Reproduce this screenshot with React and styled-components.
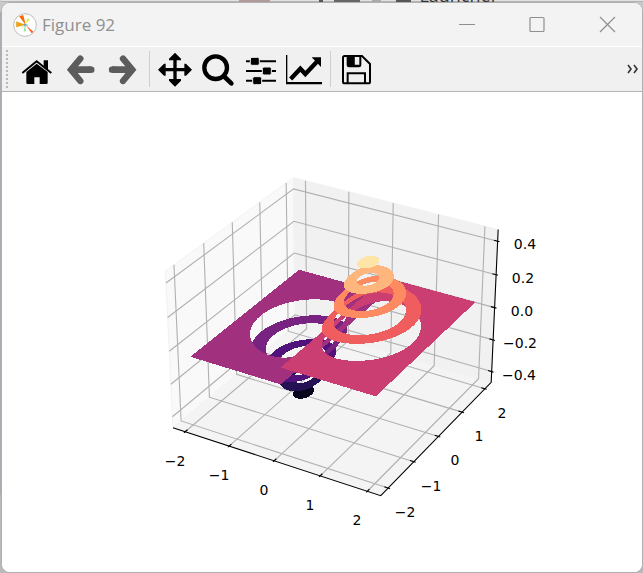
import React from "react";
import styled, { createGlobalStyle } from "styled-components";

const GlobalStyle = createGlobalStyle`
  * { box-sizing: border-box; }
  body { margin: 0; background: #b4b5b7; }
`;

const Desktop = styled.div`
  min-height: 100vh;
  display: grid;
  grid-template-rows: 2px 1fr;
  padding-left: 1px;
  background: linear-gradient(#c9c9c9 0 12px, #a9adb2 12px 495px, #b9b9b9 495px);
`;

const Behind = styled.div`
  display: flex;
  justify-content: flex-end;
  align-items: flex-end;
  height: 2px;
  padding-right: 145px;
  overflow: hidden;
  background: linear-gradient(#e2e2e2 0 1px, #b4b4b4 1px);
  color: #333;
  font: 18px/14px "Open Sans", sans-serif;
`;

const BehindMark = styled.i`
  width: ${(p) => p.$width}px;
  height: 2px;
  margin-right: ${(p) => p.$gap}px;
  background: ${(p) => p.$color};
`;

const Window = styled.main`
  display: flex;
  flex-direction: column;
  overflow: hidden;
  border: 1px solid #b0b0b0;
  border-radius: 9px;
  background: #fff;
`;

const TitleBar = styled.header`
  display: flex;
  align-items: center;
  height: 44px;
  padding-left: 11px;
  background: #f3f3f3;
  border-bottom: 1px solid #fff;
`;

const Title = styled.h1`
  flex: 1;
  margin: 0 0 0 5px;
  color: #8f8f8f;
  font: 400 17px/24px "Open Sans", sans-serif;
`;

const CaptionButton = styled.button`
  width: 70px;
  height: 40px;
  padding: 0;
  border: 0;
  background: transparent;
  color: #8f8f8f;
`;

const Toolbar = styled.nav`
  display: flex;
  align-items: center;
  height: 45px;
  padding-left: 4px;
  background: #f0f0f0;
  border-bottom: 1px solid #b5b5b5;
`;

const Grip = styled.span`
  width: 2px;
  height: 38px;
  margin-right: 8px;
  background: repeating-linear-gradient(#b8b8b8 0 2px, transparent 2px 4px);
`;

const ToolButton = styled.button`
  flex: none;
  width: 43px;
  height: 44px;
  padding: 0;
  border: 0;
  background: transparent;
  color: #000;

  &:disabled { color: #5c5c5c; }
`;

const Divider = styled.span`
  flex: none;
  width: 1px;
  height: 36px;
  margin: 0 4px;
  background: #cfcfcf;
`;

const MoreButton = styled(ToolButton)`
  width: 18px;
  margin-left: auto;
  color: #333;
`;

const Canvas = styled.section`
  flex: 1;
  min-height: 0;
  background: #fff;
`;

const Plot = styled.svg`
  display: block;
  width: 100%;
  font: 14px "DejaVu Sans", sans-serif;
`;

const Icon = styled.svg`
  display: block;
  flex: none;
  margin: 0 auto;
`;

/* ---------- toolbar drawings ---------- */

const arrow = (
  <g fill="none" stroke="currentColor" strokeWidth="19">
    <path d="M64 35L36 68L64 102" strokeLinecap="round" />
    <path d="M44 68H97" strokeWidth="20" />
    <path d="M92 68H97" strokeLinecap="round" />
  </g>
);

const drawings = {
  home: (
    <g fill="currentColor">
      <path d="M19 78L62 43L106 78" fill="none" stroke="currentColor" strokeWidth="6" />
      <path d="M83 40H96V68L83 58Z" />
      <path d="M31 75L62 50L95 75V107Q95 111 91 111H71V91H55V111H35Q31 111 31 107Z" />
    </g>
  ),
  back: arrow,
  forward: <g transform="translate(127 0) scale(-1 1)">{arrow}</g>,
  pan: (
    <path
      fill="currentColor"
      d="M63 17L81 35V40H68V63H91V50H96L114 68L96 86H91V73H68V96H81V101L63 119L45 101V96H58V73H35V86H30L12 68L30 50H35V63H58V40H45V35Z"
    />
  ),
  zoom: (
    <g fill="none" stroke="currentColor" strokeWidth="13">
      <circle cx="56" cy="62" r="34" />
      <path d="M80 87L103 109" strokeWidth="14" strokeLinecap="round" />
    </g>
  ),
  subplots: (
    <g fill="currentColor">
      <path d="M18 40H108V46H18ZM18 69H108V75H18ZM18 98H108V104H18Z" />
      <g stroke="#f0f0f0" strokeWidth="3">
        <rect x="31" y="31" width="27" height="24" rx="5" />
        <rect x="67" y="60" width="27" height="24" rx="5" />
        <rect x="38" y="89" width="27" height="24" rx="5" />
      </g>
    </g>
  ),
  axes: (
    <g fill="currentColor">
      <path d="M9 24H13V105H117V112H9Z" />
      <path d="M23 96L52 65L67 81L101 45" fill="none" stroke="currentColor" strokeWidth="13" />
      <path d="M86 31H114V60Z" />
    </g>
  ),
  save: (
    <g fill="none" stroke="currentColor" strokeWidth="6">
      <path d="M29 27H81L105 51V104Q105 109 100 109H29Q24 109 24 104V32Q24 27 29 27Z" />
      <path d="M38 109V79H90V109" />
      <path d="M38 27V54Q38 58 42 58H72Q76 58 76 54V27" />
      <path d="M38 27H58V58H38Z" fill="currentColor" stroke="none" />
      <path d="M56 30V56H73" />
    </g>
  ),
};

const tools = [
  ["home", "Home"],
  ["back", "Back", true],
  ["forward", "Forward", true],
  null,
  ["pan", "Pan"],
  ["zoom", "Zoom"],
  ["subplots", "Configure subplots"],
  ["axes", "Edit axes"],
  null,
  ["save", "Save"],
];

function FigureIcon() {
  return (
    <svg width="24" height="24" viewBox="0 0 72 72" aria-hidden="true">
      <circle cx="36" cy="36" r="34" fill="#fff" stroke="#bdbdbd" strokeWidth="3" />
      <path d="M38 36L18 10L31 6Z" fill="#ff6a00" />
      <path d="M36 35L10 42V26Z" fill="#f4a300" stroke="#b98a2a" strokeWidth="1" />
      <path d="M38 32L43 16L51 20Z" fill="#d4ef52" />
      <path d="M39 37L61 56L56 61Z" fill="#ff5a1c" />
      <path d="M36 38L39 55L32 55Z" fill="#7bea8a" />
      <path d="M34 38L27 45L25 42Z" fill="#c5ee60" />
      <path d="M32 36H44M36 32V41" stroke="#5b9aa8" strokeWidth="3" />
    </svg>
  );
}

/* ---------- 3D plot ---------- */

const LIMIT = 2.19;
const Z_LIMIT = 0.45;
const PAD = 1 + 1 / 24;
const EDGE = LIMIT * PAD;
const Z_EDGE = Z_LIMIT * PAD;
const SIDE = 8 / 7;
const HEIGHT = 6 / 7;
const DISTANCE = 10;
const SCALE = 2000;

// Camera at 30 degrees elevation and -60 degrees azimuth.
function project(x, y, z) {
  const a = (x / (2 * LIMIT)) * SIDE;
  const b = (y / (2 * LIMIT)) * SIDE;
  const c = (z / (2 * Z_LIMIT)) * HEIGHT;
  const right = 0.866 * a + 0.5 * b;
  const up = -0.25 * a + 0.433 * b + 0.866 * c;
  const depth = DISTANCE - (0.433 * a - 0.75 * b + 0.5 * c);
  return [333 + (right / depth) * SCALE, 237 - (up / depth) * SCALE];
}

const path = (points, close = true) =>
  "M" +
  points.map((p) => project(...p).map((v) => v.toFixed(2)).join(" ")).join("L") +
  (close ? "Z" : "");

// Closed curve where |x| * exp(-x^2 - y^2) equals the level.
function contour(level, sign, z) {
  const inside = (x) => Math.log(x / level) - x * x;
  const root = (a, b) => {
    for (let i = 0; i < 50; i++) {
      const m = (a + b) / 2;
      if (inside(m) < 0) a = m;
      else b = m;
    }
    return b;
  };
  const near = root(0.001, Math.SQRT1_2);
  const far = root(3, Math.SQRT1_2);
  const points = [];
  for (let i = 0; i < 120; i++) {
    const t = (i / 120) * 2 * Math.PI;
    const x = (near + far) / 2 + ((far - near) / 2) * Math.cos(t);
    const y = Math.sqrt(Math.max(0, inside(x))) * Math.sign(Math.sin(t));
    points.push([sign * x, y, z]);
  }
  return path(points);
}

const colors = [
  "#07061c", "#251255", "#51127c", "#782281", "#a1307e",
  "#cb3e71", "#ef5d5e", "#fe8a62", "#feb67c", "#fde5a7",
];

const bands = colors.map((fill, i) => {
  const z = (i - 4.5) / 10;
  const sign = Math.sign(z);
  const ring = Math.round(Math.abs(z) * 10 - 0.5);
  const outer = ring
    ? contour(ring / 10, sign, z)
    : path([[0, -2, z], [sign * 2, -2, z], [sign * 2, 2, z], [0, 2, z]]);
  const hole = ring < 4 ? contour((ring + 1) / 10, sign, z) : "";
  return { fill, d: outer + hole };
});

const ticks = [-2, -1, 0, 1, 2];
const zTicks = [-0.4, -0.2, 0, 0.2, 0.4];

const grid = [
  ...ticks.map((t) => [[t, -EDGE, -Z_EDGE], [t, EDGE, -Z_EDGE], [t, EDGE, Z_EDGE]]),
  ...ticks.map((t) => [[EDGE, t, -Z_EDGE], [-EDGE, t, -Z_EDGE], [-EDGE, t, Z_EDGE]]),
  ...zTicks.map((t) => [[-EDGE, -EDGE, t], [-EDGE, EDGE, t], [EDGE, EDGE, t]]),
];

const OUT = EDGE + 0.04;
const IN = EDGE - 0.08;

const axisLines = [
  [[-EDGE, -EDGE, -Z_EDGE], [EDGE, -EDGE, -Z_EDGE], [EDGE, EDGE, -Z_EDGE], [EDGE, EDGE, Z_EDGE]],
  ...ticks.map((t) => [[t, -OUT, -Z_EDGE], [t, -IN, -Z_EDGE]]),
  ...ticks.map((t) => [[OUT, t, -Z_EDGE], [IN, t, -Z_EDGE]]),
  ...zTicks.map((t) => [[OUT, EDGE, t], [IN, EDGE, t]]),
];

const minus = (text) => text.replace("-", "\u2212");

function labelAt(point, dx, dy, text) {
  const [x, y] = project(...point);
  return { x: Math.round(x + dx), y: Math.round(y + dy), text: minus(text) };
}

const labels = [
  ...ticks.map((t) => labelAt([t, -EDGE, -Z_EDGE], -10, 34, String(t))),
  ...ticks.map((t) => labelAt([EDGE, t, -Z_EDGE], 17, 29, String(t))),
  ...zTicks.map((t) => labelAt([EDGE, EDGE, t], 27, 8, t.toFixed(1))),
];

const panes = [
  ["#f9f9f9", [[-EDGE, -EDGE, -Z_EDGE], [-EDGE, EDGE, -Z_EDGE], [-EDGE, EDGE, Z_EDGE], [-EDGE, -EDGE, Z_EDGE]]],
  ["#f1f1f1", [[-EDGE, EDGE, -Z_EDGE], [EDGE, EDGE, -Z_EDGE], [EDGE, EDGE, Z_EDGE], [-EDGE, EDGE, Z_EDGE]]],
  ["#f4f4f4", [[-EDGE, -EDGE, -Z_EDGE], [EDGE, -EDGE, -Z_EDGE], [EDGE, EDGE, -Z_EDGE], [-EDGE, EDGE, -Z_EDGE]]],
];

function ContourPlot() {
  return (
    <Plot viewBox="0 0 640 480" role="img" aria-label="Filled 3D contour plot">
      {panes.map(([fill, points]) => (
        <path key={fill} d={path(points)} fill={fill} stroke="#f2f2f2" />
      ))}
      <g fill="none" stroke="#b0b0b0" strokeWidth="1.1">
        {grid.map((line, i) => <path key={i} d={path(line, false)} />)}
      </g>
      <g fill="none" stroke="#000" strokeWidth="1.1">
        {axisLines.map((line, i) => <path key={i} d={path(line, false)} />)}
      </g>
      <g fillRule="evenodd" shapeRendering="crispEdges">
        {bands.map((band) => <path key={band.fill} {...band} />)}
      </g>
      <g textAnchor="middle">
        {labels.map(({ x, y, text }) => (
          <text key={`${x},${y}`} x={x} y={y}>{text}</text>
        ))}
      </g>
    </Plot>
  );
}

const captions = [
  ["Minimize", <path d="M0 8.5H16" />],
  ["Maximize", <rect x="1" y="1.5" width="14" height="14" rx="1" />],
  ["Close", <path d="M1 1L16 16M16 1L1 16" />],
];

export default function App() {
  return (
    <>
      <GlobalStyle />
      <Desktop>
        <Behind aria-hidden="true">
          <BehindMark $width={31} $gap={49} $color="#b09a9a" />
          <BehindMark $width={4} $gap={11} $color="#555" />
          <BehindMark $width={26} $gap={12} $color="#666" />
          <BehindMark $width={9} $gap={15} $color="#aaa" />
          <BehindMark $width={15} $gap={8} $color="#555" />
          <span>Launcher</span>
        </Behind>
        <Window>
          <TitleBar>
            <FigureIcon />
            <Title>Figure 92</Title>
            {captions.map(([name, drawing]) => (
              <CaptionButton key={name} aria-label={name}>
                <Icon width="17" height="17" fill="none" stroke="currentColor" strokeWidth="1.2">
                  {drawing}
                </Icon>
              </CaptionButton>
            ))}
          </TitleBar>
          <Toolbar aria-label="Figure tools">
            <Grip />
            {tools.map((tool, i) =>
              tool ? (
                <ToolButton key={tool[0]} aria-label={tool[1]} disabled={tool[2]}>
                  <Icon width="43" height="44" viewBox="0 0 129 132">{drawings[tool[0]]}</Icon>
                </ToolButton>
              ) : (
                <Divider key={i} />
              )
            )}
            <MoreButton aria-label="More tools">
              <Icon width="12" height="10" fill="none" stroke="currentColor" strokeWidth="1.6">
                <path d="M1 1L4 5L1 9M7 1L10 5L7 9" />
              </Icon>
            </MoreButton>
          </Toolbar>
          <Canvas>
            <ContourPlot />
          </Canvas>
        </Window>
      </Desktop>
    </>
  );
}
